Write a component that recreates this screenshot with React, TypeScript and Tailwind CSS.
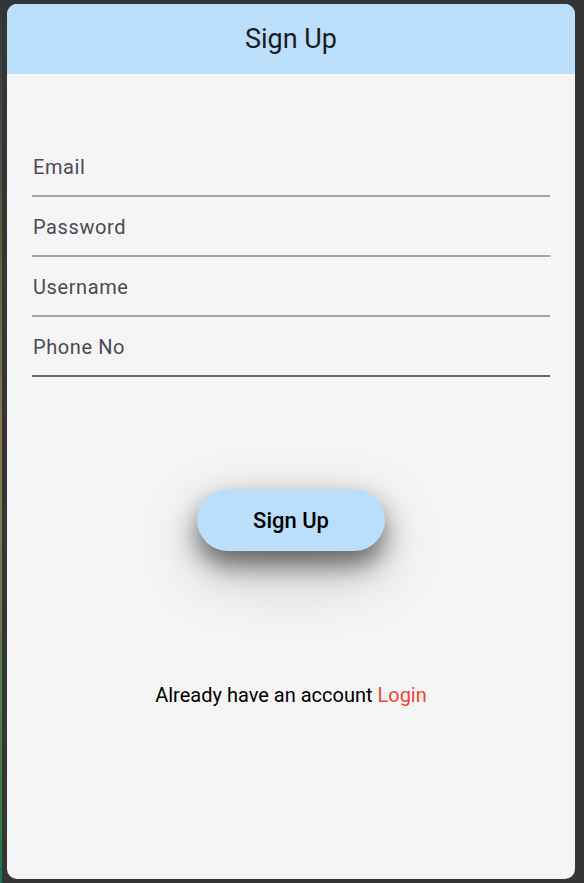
const fields = ['Email', 'Password', 'Username', 'Phone No'];

export default function App() {
  return (
    <div className="flex w-[584px] h-[883px] bg-[#353535] font-['Roboto',sans-serif]">
      <div className="w-[2px] h-full bg-gradient-to-b from-[#2b3a3a] via-[#8a7a4a] to-[#0f7a4a]" />
      <div className="flex flex-col flex-1 ml-[5px] mr-[9px] my-[4px] rounded-[10px] overflow-hidden bg-[#f5f5f5]">
        <div className="h-[70px] shrink-0 flex items-center justify-center bg-[#bbdefb] text-[27px] text-[#1c1b1f]">
          Sign Up
        </div>
        <div className="flex flex-col flex-1 px-[25px] pt-[63px]">
          {fields.map((f, i) => (
            <div
              key={f}
              className={
                i === fields.length - 1
                  ? 'h-[60px] flex items-center border-b-2 border-[#6a6a6a] pl-px pt-[2px]'
                  : 'h-[60px] flex items-center border-b-2 border-[#a3a3a3] pl-px pt-[2px]'
              }
            >
              <span className="text-[20px] tracking-[0.6px] text-[#4d4953]">{f}</span>
            </div>
          ))}
          <div className="flex justify-center mt-[112px]">
            <button
              type="button"
              className="w-[188px] h-[62px] rounded-full bg-[#bbdefb] text-black text-[22px] font-medium shadow-[0_14px_26px_rgba(0,0,0,0.55),0_22px_70px_rgba(0,0,0,0.2)]"
            >
              Sign Up
            </button>
          </div>
          <p className="mt-[132px] text-center text-[20px] leading-[24px] text-black">
            Already have an account <span className="text-[#f44336]">Login</span>
          </p>
        </div>
      </div>
    </div>
  );
}
